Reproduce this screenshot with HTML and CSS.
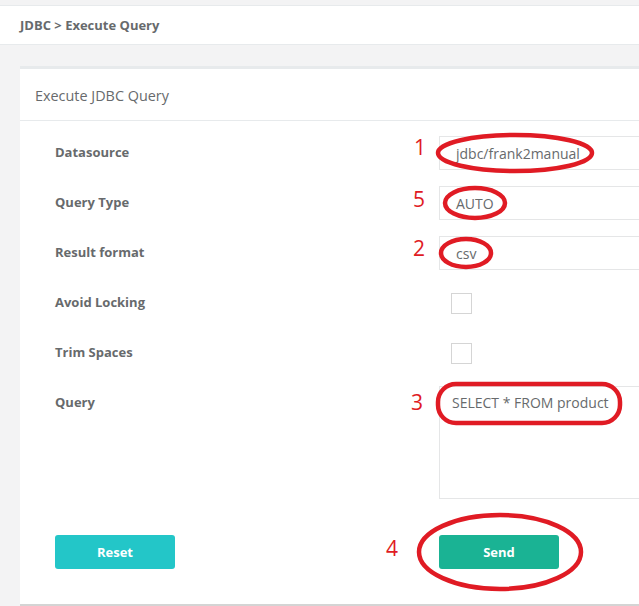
FILE: index.html
```html
<!DOCTYPE html>
<html>
<head>
<meta charset="utf-8">
<link rel="stylesheet" href="styles.css">
</head>
<body>
<div class="page">
  <div class="topstrip"></div>
  <div class="breadcrumb">JDBC &gt; Execute Query</div>
  <div class="wrapper">
    <div class="card">
      <div class="card-title">Execute JDBC Query</div>
      <div class="card-content">
        <div class="form-row">
          <label class="lbl">Datasource</label>
          <div class="field"><div class="input">jdbc/frank2manual</div></div>
        </div>
        <div class="form-row">
          <label class="lbl">Query Type</label>
          <div class="field"><div class="input">AUTO</div></div>
        </div>
        <div class="form-row">
          <label class="lbl">Result format</label>
          <div class="field"><div class="input">csv</div></div>
        </div>
        <div class="form-row">
          <label class="lbl">Avoid Locking</label>
          <div class="field"><span class="checkbox"></span></div>
        </div>
        <div class="form-row">
          <label class="lbl">Trim Spaces</label>
          <div class="field"><span class="checkbox"></span></div>
        </div>
        <div class="form-row">
          <label class="lbl">Query</label>
          <div class="field"><div class="textarea">SELECT * FROM product</div></div>
        </div>
        <div class="form-row buttons">
          <div><button class="btn btn-reset">Reset</button></div>
          <div><button class="btn btn-send">Send</button></div>
        </div>
      </div>
    </div>
  </div>
  <svg class="annotations" width="639" height="606" viewBox="0 0 639 606">
    <g fill="none" stroke="#e01b24" stroke-width="4.5">
      <ellipse cx="515" cy="153" rx="77" ry="18"/>
      <ellipse cx="475" cy="203" rx="30" ry="15"/>
      <ellipse cx="466" cy="253" rx="25" ry="14"/>
      <rect x="438" y="384" width="182" height="39" rx="18" ry="18"/>
      <ellipse cx="500" cy="552" rx="81" ry="37"/>
    </g>
    <g fill="#e01b24" font-family="'Open Sans', sans-serif" font-size="21">
      <text x="414" y="155">1</text>
      <text x="413" y="207">5</text>
      <text x="413" y="256">2</text>
      <text x="411" y="410">3</text>
      <text x="386" y="556">4</text>
    </g>
  </svg>
</div>
</body>
</html>
```
FILE: styles.css
```css
html, body {
  margin: 0;
  padding: 0;
}
body {
  font-family: "Open Sans", "Liberation Sans", sans-serif;
  font-size: 13px;
  color: #676a6c;
  background: #f3f3f4;
}
.page {
  position: relative;
  width: 639px;
  height: 606px;
  overflow: hidden;
  background: #f3f3f4;
}
.topstrip {
  height: 5px;
}
.breadcrumb {
  background: #fff;
  border-top: 1px solid #e7eaec;
  border-bottom: 1px solid #e7eaec;
  height: 38px;
  line-height: 38px;
  padding-left: 20px;
  font-weight: 700;
  color: #676a6c;
}
.wrapper {
  padding: 21px 0 0 20px;
}
.card {
  background: #fff;
  border-top: 3px solid #e7eaec;
  border-bottom: 2px solid #d4d4d4;
  margin-right: -200px;
}
.card-title {
  height: 51px;
  line-height: 53px;
  padding-left: 15px;
  font-size: 14.4px;
  color: #676a6c;
  border-bottom: 1px solid #e7eaec;
}
.card-content {
  padding: 15px 0 35px 35px;
  display: flex;
  flex-direction: column;
  gap: 16px;
}
.form-row {
  display: grid;
  grid-template-columns: 384px 1fr;
}
.form-row.buttons {
  margin-top: 20px;
}
.lbl {
  font-weight: 700;
  line-height: 32px;
  height: 34px;
  color: #676a6c;
}
.field {
  min-height: 34px;
  display: flex;
  align-items: center;
}
.input {
  box-sizing: border-box;
  height: 34px;
  width: 400px;
  border: 1px solid #e5e6e7;
  padding: 0 16px;
  line-height: 33px;
  font-size: 14px;
  color: #676a6c;
}
.checkbox {
  display: block;
  box-sizing: border-box;
  width: 21px;
  height: 21px;
  border: 1px solid #d5d5d5;
  margin-left: 12px;
}
.textarea {
  box-sizing: border-box;
  width: 400px;
  height: 113px;
  border: 1px solid #e5e6e7;
  padding: 6px 12px;
  line-height: 20px;
  font-size: 14px;
  color: #676a6c;
  align-self: flex-start;
}
.btn {
  display: block;
  width: 120px;
  height: 34px;
  border: none;
  border-radius: 3px;
  color: #fff;
  font-family: "Open Sans", "Liberation Sans", sans-serif;
  font-size: 13px;
  font-weight: 700;
  padding: 0;
}
.btn-reset {
  background: #23c6c8;
}
.btn-send {
  background: #1ab394;
}
.annotations {
  position: absolute;
  left: 0;
  top: 0;
  pointer-events: none;
}
```
